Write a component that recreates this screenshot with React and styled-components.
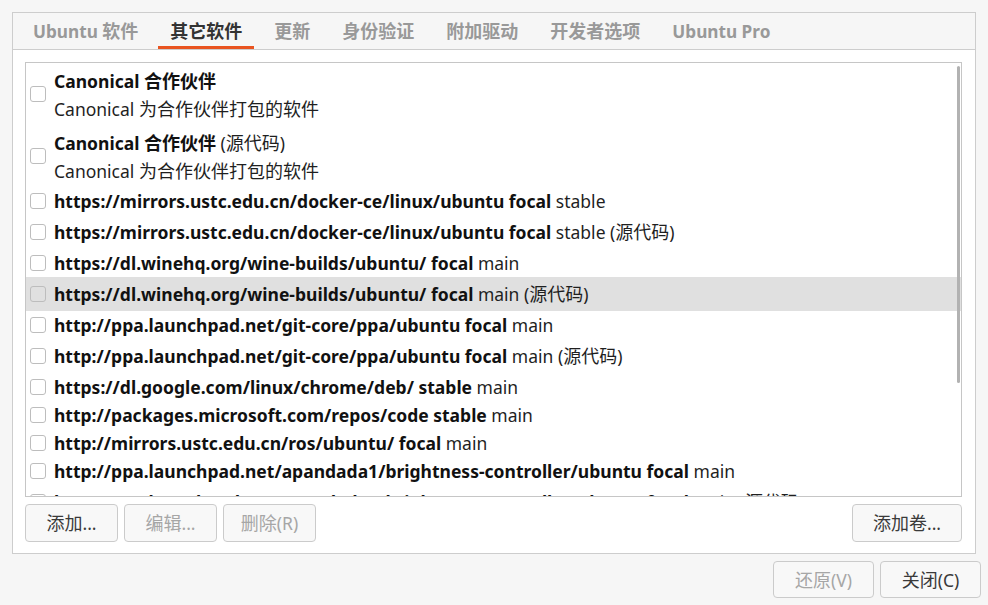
import React from "react";
import styled, { createGlobalStyle } from "styled-components";

const GlobalStyle = createGlobalStyle`
  html, body { margin: 0; padding: 0; background: #f6f6f6; }
  body {
    font-family: "Noto Sans", "Noto Sans CJK SC", sans-serif;
    font-size: 17.5px;
    color: #2d2d2d;
  }
  * { box-sizing: border-box; }
`;

const Window = styled.div`
  height: 100vh;
  display: flex;
  flex-direction: column;
  gap: 7px;
  padding: 12px 7px 7px 12px;
  background: #f6f6f6;
`;

const Notebook = styled.div`
  flex: 1;
  display: flex;
  flex-direction: column;
  margin-right: 5px;
  border: 1px solid #cdcdcd;
  background: #ffffff;
  min-height: 0;
`;

const TabBar = styled.div`
  display: flex;
  gap: 8px;
  height: 37px;
  padding-left: 8px;
  background: #f6f6f6;
  border-bottom: 1px solid #cdcdcd;
`;

const Tab = styled.div`
  display: flex;
  align-items: center;
  padding: 0 12px;
  font-size: 17.2px;
  font-weight: 700;
  color: ${(p) => (p.$active ? "#333333" : "#999999")};
  border-top: 3px solid transparent;
  border-bottom: 3px solid ${(p) => (p.$active ? "#e95420" : "transparent")};
  white-space: nowrap;
`;

const Label = styled.span`
  white-space: pre;
`;

const Page = styled.div`
  flex: 1;
  display: flex;
  flex-direction: column;
  gap: 7px;
  padding: 12px 13px 11px 12px;
  min-height: 0;
`;

const ListBox = styled.div`
  position: relative;
  flex: 1;
  min-height: 0;
  overflow: hidden;
  border: 1px solid #c6c6c6;
  background: #ffffff;
`;

const Scrollbar = styled.div`
  position: absolute;
  top: 3px;
  right: 1px;
  width: 3px;
  height: 317px;
  border-radius: 2px;
  background: #b2b2b2;
`;

const Row = styled.div`
  display: flex;
  align-items: center;
  gap: 8px;
  height: ${(p) => p.$h}px;
  padding: 0 4px;
  background: ${(p) => (p.$selected ? "#e0e0e0" : "transparent")};
  white-space: nowrap;
`;

const Check = styled.span`
  flex: none;
  width: 16px;
  height: 16px;
  border: 1px solid #bdbdbd;
  border-radius: 3px;
  background: transparent;
`;

const Lines = styled.div`
  display: flex;
  flex-direction: column;
  padding: ${(p) => (p.$double ? "4px 0 2px" : "0")};
  align-self: ${(p) => (p.$double ? "flex-start" : "auto")};
  line-height: 28px;
`;

const Line = styled.div`
  color: #1f1f1f;
  white-space: pre;
`;

const Bold = styled.b`
  font-weight: 700;
  color: #111111;
`;

const Han = styled.span`
  font-family: "Noto Sans CJK SC", sans-serif;
  font-size: 18px;
  line-height: 1;
`;

const ButtonRow = styled.div`
  display: flex;
  gap: 6px;
  justify-content: ${(p) => (p.$end ? "flex-end" : "flex-start")};
`;

const Spacer = styled.div`
  flex: 1;
`;

const Button = styled.button`
  width: ${(p) => p.$w}px;
  height: ${(p) => p.$ht}px;
  padding: 0;
  font-family: inherit;
  font-size: 17.5px;
  color: ${(p) => (p.disabled ? "#a6a6a6" : "#3a3a3a")};
  background: #f8f8f8;
  border: 1px solid #cbcbcb;
  border-radius: 4px;
`;

// Wrap runs of Chinese characters so they get the slightly larger CJK size.
function T({ children }) {
  const parts = String(children).split(/([\u3400-\u9fff]+)/);
  return parts.map((p, i) =>
    i % 2 === 1 ? <Han key={i}>{p}</Han> : <React.Fragment key={i}>{p}</React.Fragment>
  );
}

const tabs = ["Ubuntu 软件", "其它软件", "更新", "身份验证", "附加驱动", "开发者选项", "Ubuntu Pro"];

const src = " (源代码)";
const rows = [
  { bold: "https://mirrors.ustc.edu.cn/docker-ce/linux/ubuntu focal", rest: " stable" },
  { bold: "https://mirrors.ustc.edu.cn/docker-ce/linux/ubuntu focal", rest: " stable" + src },
  { bold: "https://dl.winehq.org/wine-builds/ubuntu/ focal", rest: " main" },
  { bold: "https://dl.winehq.org/wine-builds/ubuntu/ focal", rest: " main" + src, selected: true },
  { bold: "http://ppa.launchpad.net/git-core/ppa/ubuntu focal", rest: " main" },
  { bold: "http://ppa.launchpad.net/git-core/ppa/ubuntu focal", rest: " main" + src },
  { bold: "https://dl.google.com/linux/chrome/deb/ stable", rest: " main" },
  { bold: "http://packages.microsoft.com/repos/code stable", rest: " main" },
  { bold: "http://mirrors.ustc.edu.cn/ros/ubuntu/ focal", rest: " main" },
  { bold: "http://ppa.launchpad.net/apandada1/brightness-controller/ubuntu focal", rest: " main" },
  { bold: "http://ppa.launchpad.net/apandada1/brightness-controller/ubuntu focal", rest: " main" + src },
];

export default function App() {
  return (
    <>
      <GlobalStyle />
      <Window>
        <Notebook>
          <TabBar>
            {tabs.map((t, i) => (
              <Tab key={t} $active={i === 1}>
                <Label><T>{t}</T></Label>
              </Tab>
            ))}
          </TabBar>
          <Page>
            <ListBox>
              <Row $h={62}>
                <Check />
                <Lines $double>
                  <Line>
                    <Bold><T>Canonical 合作伙伴</T></Bold>
                  </Line>
                  <Line><T>Canonical 为合作伙伴打包的软件</T></Line>
                </Lines>
              </Row>
              <Row $h={62}>
                <Check />
                <Lines $double>
                  <Line>
                    <Bold><T>Canonical 合作伙伴</T></Bold> (<Han>源代码</Han>)
                  </Line>
                  <Line><T>Canonical 为合作伙伴打包的软件</T></Line>
                </Lines>
              </Row>
              {rows.map((r, i) => (
                <Row key={i} $h={r.rest.includes("源") ? 34 : 28} $selected={r.selected}>
                  <Check />
                  <Lines>
                    <Line>
                      <Bold>{r.bold}</Bold>
                      <T>{r.rest}</T>
                    </Line>
                  </Lines>
                </Row>
              ))}
              <Scrollbar />
            </ListBox>
            <ButtonRow>
              <Button $w={93} $ht={38}><T>添加...</T></Button>
              <Button $w={93} $ht={38} disabled><T>编辑...</T></Button>
              <Button $w={93} $ht={38} disabled><T>删除(R)</T></Button>
              <Spacer />
              <Button $w={110} $ht={38}><T>添加卷...</T></Button>
            </ButtonRow>
          </Page>
        </Notebook>
        <ButtonRow $end>
          <Button $w={101} $ht={37} disabled><T>还原(V)</T></Button>
          <Button $w={101} $ht={37}><T>关闭(C)</T></Button>
        </ButtonRow>
      </Window>
    </>
  );
}
